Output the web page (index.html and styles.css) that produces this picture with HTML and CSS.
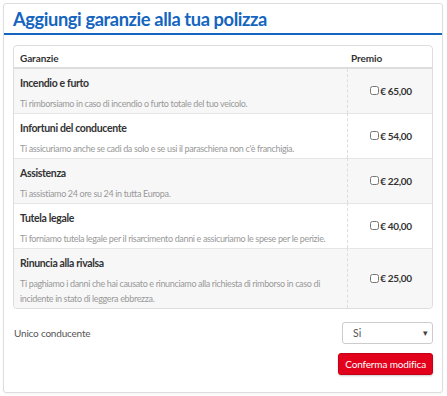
FILE: index.html
```html
<!DOCTYPE html>
<html lang="it">

<head>
    <meta charset="UTF-8">
    <title>Aggiungi garanzie</title>
    <link rel="stylesheet" href="styles.css">
</head>

<body>

    <div class="card">
        <div class="card-head">
            <h2>Aggiungi garanzie alla tua polizza</h2>
        </div>

        <div class="card-body">
            <table class="cover-table">
                <thead>
                    <tr>
                        <th>Garanzie</th>
                        <th class="col-price">Premio</th>
                    </tr>
                </thead>
                <tbody>
                    <tr>
                        <td>
                            <div class="cover-name">Incendio e furto</div>
                            <div class="cover-desc">Ti rimborsiamo in caso di incendio o furto totale del tuo veicolo.</div>
                        </td>
                        <td class="price"><label><input type="checkbox">€ 65,00</label></td>
                    </tr>
                    <tr>
                        <td>
                            <div class="cover-name">Infortuni del conducente</div>
                            <div class="cover-desc">Ti assicuriamo anche se cadi da solo e se usi il paraschiena non c'è franchigia.</div>
                        </td>
                        <td class="price"><label><input type="checkbox">€ 54,00</label></td>
                    </tr>
                    <tr>
                        <td>
                            <div class="cover-name">Assistenza</div>
                            <div class="cover-desc">Ti assistiamo 24 ore su 24 in tutta Europa.</div>
                        </td>
                        <td class="price"><label><input type="checkbox">€ 22,00</label></td>
                    </tr>
                    <tr>
                        <td>
                            <div class="cover-name">Tutela legale</div>
                            <div class="cover-desc">Ti forniamo tutela legale per il risarcimento danni e assicuriamo le spese per le perizie.</div>
                        </td>
                        <td class="price"><label><input type="checkbox">€ 40,00</label></td>
                    </tr>
                    <tr>
                        <td>
                            <div class="cover-name">Rinuncia alla rivalsa</div>
                            <div class="cover-desc">Ti paghiamo i danni che hai causato e rinunciamo alla richiesta di rimborso in caso di incidente in stato di leggera ebbrezza.</div>
                        </td>
                        <td class="price"><label><input type="checkbox">€ 25,00</label></td>
                    </tr>
                </tbody>
            </table>

            <div class="driver-row">
                <span class="driver-label">Unico conducente</span>
                <div class="select-wrap">
                    <select>
                        <option>Si</option>
                        <option>No</option>
                    </select>
                    <span class="select-arrow">▾</span>
                </div>
            </div>

            <div class="actions">
                <button type="button" class="btn-confirm">Conferma modifica</button>
            </div>
        </div>
    </div>

</body>

</html>
```

FILE: styles.css
```css
body {
    margin: 0;
    padding: 3px 4px 3px 3px;
    font-family: Lato, "Open Sans", Arial, sans-serif;
    color: #333;
    background: #fff;
}

/* Outer panel */
.card {
    border: 1px solid #ddd;
    border-radius: 3px;
    box-shadow: 0 1px 2px rgba(0, 0, 0, 0.05);
    padding-bottom: 17px;
}

.card-head {
    border-bottom: 2px solid #1565c0;
    padding: 4px 9px 3px;
}

.card-head h2 {
    margin: 0;
    font-size: 18.3px;
    line-height: 22px;
    font-weight: bold;
    color: #1565c0;
    letter-spacing: -0.4px;
}

.card-body {
    padding: 10px 9px 0 9px;
}

/* Table of covers */
.cover-table {
    width: 100%;
    border-collapse: separate;
    border-spacing: 0;
    border: 1px solid #ddd;
    border-radius: 4px;
}

.cover-table th {
    text-align: left;
    font-weight: bold;
    font-size: 10px;
    line-height: 14px;
    padding: 5px 6px 2px;
    border-bottom: 2px solid #ddd;
    color: #333;
    letter-spacing: -0.1px;
}

.cover-table th.col-price {
    width: 75px;
    padding-left: 4px;
}

.cover-table td {
    padding: 6px 6px 2px;
    vertical-align: top;
    border-top: 1px solid #e5e5e5;
}

.cover-table tbody tr:first-child td {
    border-top: none;
}

.cover-table tbody tr:nth-child(odd) td {
    background-color: #f7f7f7;
}

.cover-table tbody tr:last-child td:first-child {
    border-bottom-left-radius: 4px;
}

.cover-table tbody tr:last-child td:last-child {
    border-bottom-right-radius: 4px;
}

.cover-name {
    font-weight: bold;
    font-size: 10.5px;
    line-height: 16px;
    margin-bottom: 5px;
    letter-spacing: -0.35px;
}

.cover-desc {
    font-size: 9px;
    line-height: 15px;
    color: #999;
    letter-spacing: -0.35px;
}

.cover-table td.price {
    vertical-align: middle;
    text-align: center;
    border-left: 1px dashed #ddd;
    font-weight: bold;
    font-size: 10px;
    letter-spacing: -0.3px;
    padding: 0 4px 0 6px;
}

.price label {
    display: inline-flex;
    align-items: center;
}

.price input {
    width: 9px;
    height: 9px;
    margin: 0 1px 0 0;
}

/* Driver select */
.driver-row {
    display: flex;
    justify-content: space-between;
    align-items: center;
    margin-top: 13px;
    font-size: 10px;
    letter-spacing: -0.2px;
    color: #555;
}

.driver-label {
    padding-left: 1px;
}

.select-wrap {
    position: relative;
    width: 91px;
}

.select-wrap select {
    appearance: none;
    -webkit-appearance: none;
    display: block;
    width: 100%;
    height: 22px;
    border: 1px solid #ccc;
    border-radius: 3px;
    background: #fff;
    padding: 0 10px;
    font-family: inherit;
    font-size: 10.5px;
    color: #555;
}

.select-arrow {
    position: absolute;
    right: 5px;
    top: 5px;
    font-size: 9px;
    color: #444;
    pointer-events: none;
}

.actions {
    display: flex;
    justify-content: flex-end;
    margin-top: 9px;
}

.btn-confirm {
    background-color: #e3001b;
    color: #fff;
    border: 1px solid #c40017;
    border-radius: 3px;
    height: 22px;
    padding: 0 6px;
    font-family: inherit;
    font-size: 10px;
    letter-spacing: -0.15px;
    box-shadow: 0 1px 2px rgba(0, 0, 0, 0.2);
}
```
